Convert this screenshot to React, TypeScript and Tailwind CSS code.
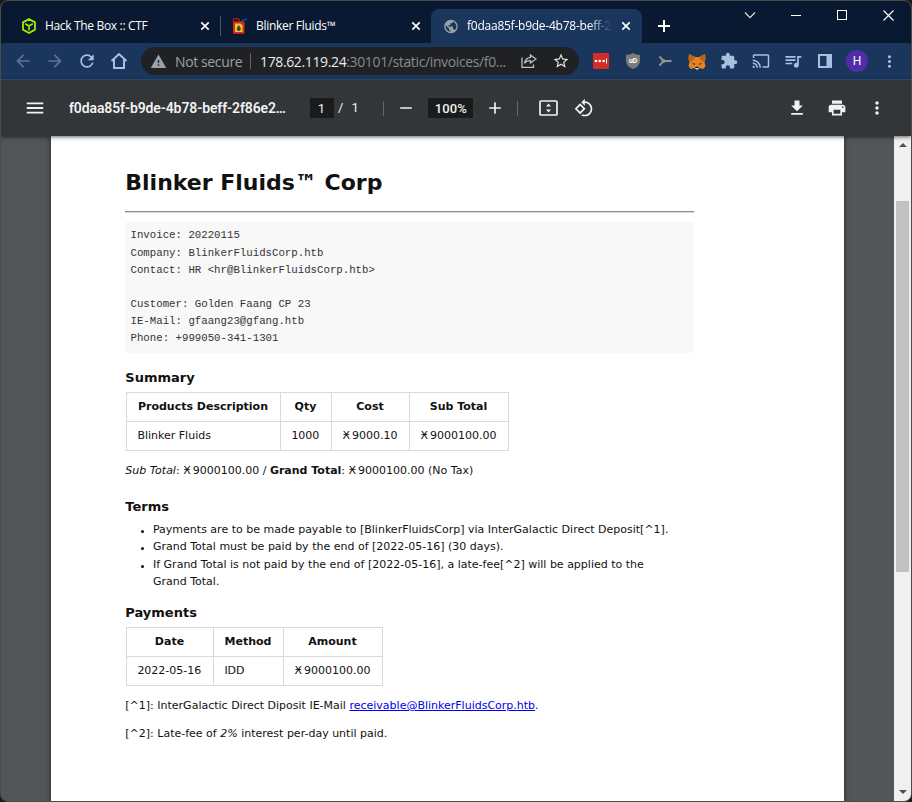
import type { ReactNode } from "react";
import {
  MdArrowBack,
  MdArrowForward,
  MdRefresh,
  MdWarning,
  MdStarBorder,
  MdExtension,
  MdCast,
  MdQueueMusic,
  MdMoreVert,
  MdPrint,
  MdMenu,
  MdRotate90DegreesCcw,
  MdPublic,
  MdFileDownload,
  MdAdd,
  MdRemove,
} from "react-icons/md";

function HtbIcon() {
  return (
    <svg width="16" height="18" viewBox="0 0 16 18" fill="none" stroke="#9fef00" strokeWidth="1.8" strokeLinejoin="round">
      <path d="M8 2 14 5.400v7.200L8 16 2 12.600V5.400z" />
      <path d="M4.200 6.800 8 9l3.800-2.200M8 9v4.600" strokeWidth="1.600" />
    </svg>
  );
}

function FuelIcon() {
  return (
    <svg width="16" height="16" viewBox="0 0 16 16">
      <path d="M1.500 4V1.500Q1.500.7 2.500.7h4l1.500 3.300" fill="none" stroke="#a51d16" strokeWidth="1.300" />
      <rect x="1" y="3.400" width="11.500" height="12.400" rx="1" fill="#d92a20" />
      <path d="M9 4 11.500 2l3.500-1" fill="none" stroke="#24549a" strokeWidth="1.300" />
      <path d="M3 5.500h5.500l2 2V14H3z" fill="#f3c51d" />
      <path d="M6.800 7c1.600 2.200 2 3 2 4a2 2 0 0 1-4 0c0-1 .4-1.800 2-4z" fill="#33424c" />
    </svg>
  );
}

function CloseX() {
  return (
    <svg width="16" height="16" viewBox="0 0 16 16" stroke="#fff" strokeWidth="1.7">
      <path d="M4.300 4.300 11.700 11.700M11.700 4.300 4.300 11.700" />
    </svg>
  );
}

function Tab({ icon, title, active, end, spacing }: { icon: ReactNode; title: string; active?: boolean; end?: ReactNode; spacing: string }) {
  return (
    <div className={`flex h-[34px] w-[211px] shrink-0 items-center pl-3 ${active ? "rounded-t-lg bg-[#1b365d]" : ""}`}>
      <span className="flex w-4 shrink-0 justify-center">{icon}</span>
      <span
        className={`ml-2 shrink-0 whitespace-nowrap font-['Open_Sans',sans-serif] text-[12px] leading-[16px] text-white ${spacing} ${
          active ? "w-[145px] [mask-image:linear-gradient(to_right,#000_84%,transparent)]" : "w-[146px]"
        }`}
      >
        {title}
      </span>
      <span className="ml-[6px] shrink-0">
        <CloseX />
      </span>
      {end}
    </div>
  );
}

function TabStrip() {
  return (
    <div className="flex h-[42px] shrink-0 bg-[#0a1932] pl-2 pt-2">
      <Tab icon={<HtbIcon />} title="Hack The Box :: CTF" spacing="tracking-[-0.33px]" end={<span className="ml-[7px] h-5 w-px shrink-0 bg-[#4a5568]" />} />
      <Tab icon={<FuelIcon />} title="Blinker Fluids™" spacing="tracking-[-0.30px]" />
      <Tab active icon={<MdPublic size={17} color="#9aa0a6" />} title="f0daa85f-b9de-4b78-beff-2" spacing="tracking-[-0.24px]" />
      <div className="flex h-[34px] w-[44px] items-center justify-center">
        <svg width="14" height="14" stroke="#fff" strokeWidth="2">
          <path d="M1 7h12M7 1v12" />
        </svg>
      </div>
      <div className="-mt-2 ml-auto flex h-7 w-[184px] text-white">
        <span className="flex w-[46px] items-center justify-center">
          <svg width="12" height="12" fill="none" stroke="#e5e7eb" strokeWidth="1.1">
            <path d="m1 3.500 5 5.200 5-5.200" />
          </svg>
        </span>
        <span className="flex w-[46px] items-center justify-center pt-px">
          <span className="h-px w-[10px] bg-white" />
        </span>
        <span className="flex w-[46px] items-center justify-center">
          <span className="size-[10px] border border-white" />
        </span>
        <span className="flex w-[46px] items-center justify-center">
          <svg width="11" height="11" stroke="#fff" strokeWidth="1.1">
            <path d="M.5.5l10 10M10.500.5l-10 10" />
          </svg>
        </span>
      </div>
    </div>
  );
}

function Cell({ children, w = "w-8" }: { children: ReactNode; w?: string }) {
  return <span className={`flex h-7 shrink-0 items-center justify-center ${w}`}>{children}</span>;
}

function MetaMask() {
  return (
    <svg width="18" height="17" viewBox="0 0 18 17">
      <path d="M1 1 7 4h4l6-3 .5 5-1 3 1 4-2 3-4-1-2 1.500h-1L6.500 15l-4 1-2-3 1-4L.5 6z" fill="#e8821e" />
      <path d="M1 1l6 3-1.500 3-4 2L.5 6zM17 1l-6 3 1.500 3 4 2 1-3z" fill="#b8651b" />
      <path d="M4 9.500 7.500 11 6 12zM14 9.500 10.500 11 12 12z" fill="#233447" />
      <path d="m6 14 3-1.500 3 1.500-2 2.500H8z" fill="#d7c1b3" />
      <path d="M7.500 13.500h3l.5 1.500H7z" fill="#161616" />
    </svg>
  );
}

function AddressBar() {
  return (
    <div className="flex h-[37px] shrink-0 items-center border-b border-[#34527c] bg-[#1b365d] pl-[6px] text-[#a9bfe0]">
      <Cell><MdArrowBack size={20} className="text-[#5b7399]" /></Cell>
      <Cell><MdArrowForward size={20} className="text-[#5b7399]" /></Cell>
      <Cell><MdRefresh size={20} /></Cell>
      <Cell>
        <svg width="18" height="18" viewBox="0 0 18 18" fill="none" stroke="currentColor" strokeWidth="2">
          <path d="M1.500 9 9 2l7.500 7M4 7.500V16h10V7.500" />
        </svg>
      </Cell>
      <div className="ml-[6px] flex h-7 w-[438px] shrink-0 items-center rounded-full bg-[#202124] pl-[9px] font-['Open_Sans',sans-serif] text-[14px] text-[#9aa0a6]">
        <MdWarning size={17} />
        <span className="ml-2 w-[75px] whitespace-nowrap tracking-[-0.38px]">Not secure</span>
        <span className="h-4 w-px bg-[#5f6368]" />
        <span className="ml-[9px] w-[253px] whitespace-nowrap tracking-[-0.37px] text-[#848b91]">
          <span className="text-[#e8eaed]">178.62.119.24</span>:30101/static/invoices/f0...
        </span>
        <Cell>
          <svg width="16" height="14" viewBox="0 0 16 14" fill="none" stroke="#bdc1c6" strokeWidth="1.300">
            <path d="M1 3.500v9.800h11.500V10.500M9.500 1l5.500 4-5.500 4V6.600C6.500 6.600 4.700 7.300 3.600 9.400 4 6 6 3.700 9.500 3.300z" />
          </svg>
        </Cell>
        <Cell><MdStarBorder size={18} className="text-[#dfe1e5]" /></Cell>
      </div>
      <div className="ml-[6px] flex">
        <Cell>
          <svg width="16" height="16">
            <rect width="16" height="16" rx="1" fill="#d32d27" />
            <circle cx="3" cy="8" r="1.300" fill="#fff" />
            <circle cx="6.800" cy="8" r="1.300" fill="#fff" />
            <circle cx="10.600" cy="8" r="1.300" fill="#fff" />
            <path d="M13.500 5.500v5" stroke="#fff" />
          </svg>
        </Cell>
        <Cell>
          <span className="relative flex items-center justify-center">
            <svg width="14" height="16" viewBox="0 0 14 16"><path d="M7 0q3 2 7 2v6q0 5-7 8-7-3-7-8V2q4 0 7-2" fill="#7b7b79" /></svg>
            <span className="absolute font-['Roboto',sans-serif] text-[7px] font-bold tracking-[-0.300px] text-white">uD</span>
          </span>
        </Cell>
        <Cell>
          <svg width="14" height="12" fill="none" stroke="#94948f" strokeWidth="1.900">
            <path d="M1.500 1.500 5.500 6l-4 4.500M5.500 6h8" />
            <circle cx="5.500" cy="6" r="1.900" fill="#94948f" stroke="none" />
          </svg>
        </Cell>
        <Cell><MetaMask /></Cell>
        <Cell><MdExtension size={18} /></Cell>
        <Cell><MdCast size={18} /></Cell>
        <Cell><MdQueueMusic size={20} /></Cell>
        <Cell>
          <svg width="14" height="14"><path d="M1 1h12v12H1z" fill="none" stroke="currentColor" strokeWidth="2" /><path d="M8.500 1H13v12H8.500z" fill="currentColor" /></svg>
        </Cell>
        <Cell>
          <span className="flex size-[22px] items-center justify-center rounded-full bg-[#512da8] font-['Roboto',sans-serif] text-[12px] text-white">H</span>
        </Cell>
        <Cell w="w-[33px]"><MdMoreVert size={19} /></Cell>
      </div>
    </div>
  );
}

function PdfToolbar() {
  return (
    <div className="relative z-10 flex h-14 shrink-0 items-center bg-[#323639] pl-[18px] pr-[14px] font-['Roboto',sans-serif] text-[14px] text-[#f1f1f1] shadow-[0_1px_4px_rgba(0,0,0,0.6)]">
      <Cell><MdMenu size={22} /></Cell>
      <span className="ml-[18px] w-[241px] whitespace-nowrap font-semibold tracking-[-0.12px]">f0daa85f-b9de-4b78-beff-2f86e2…</span>
      <span className="flex h-5 w-6 items-center justify-center bg-[#191b1c] pt-px pr-px text-[13px]">1</span>
      <span className="ml-[4px] text-[13px]">/</span>
      <span className="ml-[8px] w-[32px] text-[13px]">1</span>
      <span className="h-[15px] w-px bg-[#65686b]" />
      <Cell w="w-[44px]"><MdRemove size={20} /></Cell>
      <span className="flex h-5 w-[45px] items-center justify-center bg-[#191b1c] pt-px text-[13px] font-medium tracking-[0.1px]">100%</span>
      <Cell w="w-[44px]"><MdAdd size={20} /></Cell>
      <span className="h-[15px] w-px bg-[#65686b]" />
      <Cell w="w-[60px]">
        <svg width="19" height="16" viewBox="0 0 19 16">
          <rect x="1" y="1" width="17" height="14" rx="1" fill="none" stroke="#f1f1f1" strokeWidth="1.700" />
          <path d="M9.500 3.500 12 6.500H7zM9.500 12.500 12 9.500H7z" fill="#f1f1f1" />
        </svg>
      </Cell>
      <Cell w="w-[12px]"><MdRotate90DegreesCcw size={20} className="shrink-0" /></Cell>
      <div className="ml-auto flex">
        <Cell w="w-10"><MdFileDownload size={20} /></Cell>
        <Cell w="w-10"><MdPrint size={20} /></Cell>
        <Cell w="w-10"><MdMoreVert size={20} /></Cell>
      </div>
    </div>
  );
}

function Table({ head, row, widths }: { head: string[]; row: string[]; widths: string[] }) {
  return (
    <table className="ml-[0.700px] table-fixed border-collapse text-[11px] leading-[17px]">
      <thead>
        <tr className="h-[29px]">
          {head.map((h, i) => (
            <th key={h} className={`border border-[#d9d9d9] p-0 pb-px pr-px text-center font-bold ${widths[i]}`}>{h}</th>
          ))}
        </tr>
      </thead>
      <tbody>
        <tr className="h-[29px]">
          {row.map((c, i) => (
            <td key={i} className={`border border-[#d9d9d9] p-0 pb-px pl-[10.400px] whitespace-nowrap ${c.startsWith("Ӿ") ? "[word-spacing:-1.500px]" : ""}`}>{c}</td>
          ))}
        </tr>
      </tbody>
    </table>
  );
}

function Price({ value }: { value: string }) {
  return <span className="[word-spacing:-1.500px]">Ӿ {value}</span>;
}

function Term({ children }: { children: ReactNode }) {
  return (
    <li className="flex">
      <span className="ml-[15.700px] mr-[9px] mt-[9px] size-[3px] shrink-0 rounded-full bg-[#111]" />
      <span className="whitespace-nowrap">{children}</span>
    </li>
  );
}

const details = `Invoice: 20220115
Company: BlinkerFluidsCorp.htb
Contact: HR <hr@BlinkerFluidsCorp.htb>

Customer: Golden Faang CP 23
IE-Mail: gfaang23@gfang.htb
Phone: +999050-341-1301`;

function Invoice() {
  return (
    <div className="ml-[50px] w-[793px] shrink-0 bg-white pl-[74.300px] pt-[31px] font-['DejaVu_Sans',sans-serif] text-[11px] leading-[17.500px] text-[#111] shadow-[0_0_5px_rgba(0,0,0,0.6)]">
      <h1 className="h-[44px] text-[22px] font-bold leading-[32px]">Blinker Fluids™ Corp</h1>
      <div className="box-content h-px w-[568.500px] border-b border-[#d8d8d8] bg-[#8d8d8d]" />
      <pre className="mt-[9px] h-[131px] w-[568.500px] rounded-[3px] bg-[#f8f8f8] px-[5.200px] pt-[5.400px] font-['Liberation_Mono',monospace] text-[10.730px] leading-[17.150px] text-[#333]">{details}</pre>
      <h3 className="mt-[15px] h-[24px] text-[13px] font-bold leading-[20px]">Summary</h3>
      <Table head={["Products Description", "Qty", "Cost", "Sub Total"]} row={["Blinker Fluids", "1000", "Ӿ 9000.10", "Ӿ 9000100.00"]} widths={["w-[154px]", "w-[51px]", "w-[78px]", "w-[99px]"]} />
      <p className="mt-[11px] h-[35px]">
        <em>Sub Total</em>: <Price value="9000100.00" /> / <b>Grand Total</b>: <Price value="9000100.00" /> (No Tax)
      </p>
      <h3 className="h-[24px] text-[13px] font-bold leading-[20px]">Terms</h3>
      <ul className="h-[82px] w-[569px] leading-[17.400px]">
        <Term>Payments are to be made payable to [BlinkerFluidsCorp] via InterGalactic Direct Deposit[^1].</Term>
        <Term>Grand Total must be paid by the end of [2022-05-16] (30 days).</Term>
        <Term>
          If Grand Total is not paid by the end of [2022-05-16], a late-fee[^2] will be applied to the
          <br />
          Grand Total.
        </Term>
      </ul>
      <h3 className="h-[24px] text-[13px] font-bold leading-[20px]">Payments</h3>
      <Table head={["Date", "Method", "Amount"]} row={["2022-05-16", "IDD", "Ӿ 9000100.00"]} widths={["w-[87px]", "w-[70px]", "w-[99px]"]} />
      <p className="mt-[11px] h-[28px]">
        [^1]: InterGalactic Direct Diposit IE-Mail <a className="text-[#0000ee] underline">receivable@BlinkerFluidsCorp.htb</a>.
      </p>
      <p>[^2]: Late-fee of <em>2%</em> interest per-day until paid.</p>
    </div>
  );
}

function Scrollbar() {
  return (
    <div className="ml-auto flex w-[17px] shrink-0 flex-col items-center bg-[#f0f0f0]">
      <svg className="mt-[7px] shrink-0" width="8" height="5"><path d="M0 4 4 0l4 4z" fill="#505050" /></svg>
      <div className="mt-[53px] h-[371px] w-[13px] shrink-0 bg-[#c1c1c1]" />
      <svg className="mb-[7px] mt-auto shrink-0" width="8" height="4"><path d="M0 0h8L4 4z" fill="#505050" /></svg>
    </div>
  );
}

export default function App() {
  return (
    <div className="h-[802px] w-[912px] overflow-hidden bg-[#1c1c1c]">
      <div className="flex h-full flex-col overflow-hidden rounded-lg border border-[#4b4b4b] bg-[#525659]">
        <TabStrip />
        <AddressBar />
        <PdfToolbar />
        <div className="flex min-h-0 flex-1 overflow-hidden">
          <Invoice />
          <Scrollbar />
        </div>
      </div>
    </div>
  );
}
